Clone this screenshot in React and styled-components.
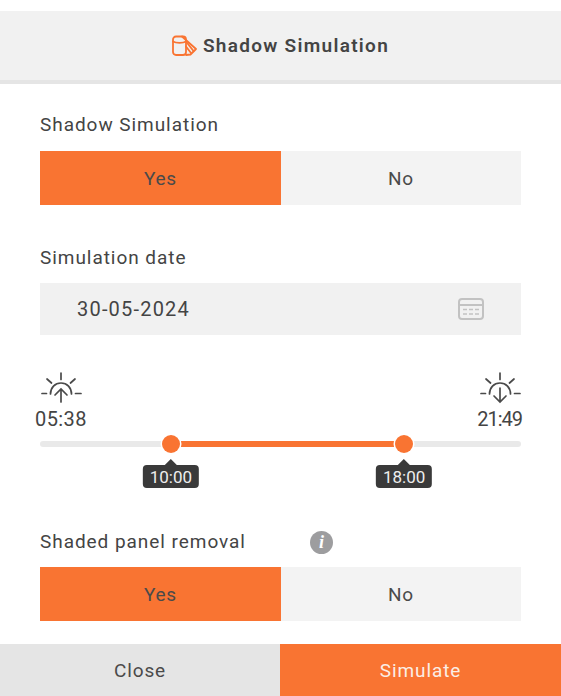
import styled, { createGlobalStyle } from 'styled-components';

const GlobalStyle = createGlobalStyle`
    html, body {
        margin: 0;
        padding: 0;
        background: #fff;
    }
    body {
        font-family: 'Roboto', 'Liberation Sans', sans-serif;
    }
`;

const Panel = styled.div`
    width: 561px;
    height: 696px;
    padding-top: 11px;
    box-sizing: border-box;
    display: flex;
    flex-direction: column;
    color: #444;
    overflow: hidden;
`;

const Header = styled.div`
    height: 69px;
    flex: none;
    background: #f1f1f1;
    border-bottom: 4px solid #e5e5e5;
    display: flex;
    align-items: center;
    justify-content: center;
    gap: 6px;
    font-size: 19px;
    font-weight: 600;
    letter-spacing: 1.3px;
    color: #444;
`;

const Body = styled.div`
    flex: 1;
    padding: 29px 40px 0;
    display: flex;
    flex-direction: column;
`;

const Label = styled.div`
    display: flex;
    align-items: center;
    height: 22px;
    font-size: 19px;
    letter-spacing: 0.95px;
    color: #444;
    margin-bottom: ${(p) => p.$gap}px;
`;

const Toggle = styled.div`
    display: grid;
    grid-template-columns: 240.7px 1fr;
    height: 54px;
    background: #f3f3f3;
    margin-bottom: ${(p) => p.$gap}px;
`;

const ToggleOption = styled.div`
    display: flex;
    align-items: center;
    justify-content: center;
    font-size: 19px;
    letter-spacing: 0.6px;
    color: #4a4a4a;
    background: ${(p) => (p.$active ? '#f97432' : 'transparent')};
`;

const DateField = styled.div`
    height: 52px;
    background: #f1f1f1;
    display: flex;
    align-items: center;
    justify-content: space-between;
    padding: 0 37px;
    font-size: 20px;
    letter-spacing: 1.2px;
    color: #444;
    margin-bottom: 37px;
`;

const SunRow = styled.div`
    display: flex;
    justify-content: space-between;
    margin: 0 -1px 0 -5px;
`;

const SunBlock = styled.div`
    display: flex;
    flex-direction: column;
    align-items: center;
    font-size: 20px;
    line-height: 24px;
    letter-spacing: ${(p) => (p.$tight ? '-1px' : '0.4px')};
    color: #444;
    gap: 3px;
`;

const Slider = styled.div`
    position: relative;
    height: 6px;
    margin: 10px 0 0;
    background: #e9e9e9;
    border-radius: 3px;
`;

const SliderFill = styled.div`
    position: absolute;
    top: 0;
    bottom: 0;
    background: #f97432;
`;

const Thumb = styled.div`
    position: absolute;
    top: 3px;
    width: 18px;
    height: 18px;
    margin: -9px 0 0 -9px;
    border-radius: 50%;
    background: #f97432;
    box-shadow: 0 0 0 1.5px #fff;
`;

const ThumbTip = styled.div`
    position: absolute;
    top: 24px;
    transform: translateX(-50%);
    height: 23px;
    padding: 0 7px;
    border-radius: 4px;
    background: #3a3a3a;
    color: #eee;
    font-size: 17px;
    line-height: 24px;

    &::before {
        content: '';
        position: absolute;
        left: 50%;
        top: -6px;
        margin-left: -6px;
        border: 6px solid transparent;
        border-top: 0;
        border-bottom-color: #3a3a3a;
    }
`;

const RemovalLabel = styled(Label)`
    margin-top: 83px;
`;

const InfoBadge = styled.span`
    width: 23px;
    height: 23px;
    margin: 3px 0 0 64px;
    border-radius: 50%;
    background: #9d9d9f;
    color: #fff;
    font-family: 'Liberation Serif', serif;
    font-style: italic;
    font-weight: 700;
    font-size: 18px;
    letter-spacing: 0;
    display: flex;
    align-items: center;
    justify-content: center;
`;

const Footer = styled.div`
    flex: none;
    height: 52px;
    display: grid;
    grid-template-columns: 280px 281px;
`;

const FooterButton = styled.div`
    display: flex;
    align-items: center;
    justify-content: center;
    font-size: 19px;
    letter-spacing: 0.9px;
    color: ${(p) => (p.$primary ? '#fbeee6' : '#4a4a4a')};
    background: ${(p) => (p.$primary ? '#f97432' : '#e5e5e5')};
`;

function ShadowIcon() {
    return (
        <svg width="25" height="22" viewBox="0 0 25 22" fill="none" stroke="#f97432" strokeWidth="1.8" strokeLinecap="round" strokeLinejoin="round">
            <rect x="1" y="1.500" width="13" height="18.500" rx="3" />
            <path d="M1 6.500c3 1.800 10 1.800 13 0" />
            <path d="M10 1.500l14 12.500-5.500 5.500-4.500.5" />
            <path d="M14 6.500l7.500 9.500M14 11.500l5 6.500" />
        </svg>
    );
}

function CalendarIcon() {
    return (
        <svg width="26" height="24" viewBox="0 0 26 24" fill="none" stroke="#c2c2c2" strokeWidth="2">
            <rect x="1" y="2" width="24" height="20" rx="3" />
            <path d="M1 8h24" />
            <path d="M5 12.500h16M5 17h16" strokeDasharray="4 2" strokeWidth="1.600" />
        </svg>
    );
}

function SunIcon({ down }) {
    return (
        <svg width="42" height="32" viewBox="0 0 42 32" fill="none" stroke="#4a4a4a" strokeWidth="1.700" strokeLinecap="round">
            <path d="M21 1v6.500M7 7l4.500 4M35 7l-4.500 4M2 21.500h4.500M35.500 21.500H41" />
            <path d="M10.500 22c0-6.500 4.500-11 10.500-11s10.500 4.500 10.500 11" />
            {down ? (
                <path d="M21 16v14M15 24l6 6 6-6" />
            ) : (
                <path d="M21 30V17M15 23l6-6 6 6" />
            )}
        </svg>
    );
}

function App() {
    return (
        <>
            <GlobalStyle />
            <Panel>
                <Header>
                    <ShadowIcon />
                    Shadow Simulation
                </Header>
                <Body>
                    <Label $gap={16}>Shadow Simulation</Label>
                    <Toggle $gap={41}>
                        <ToggleOption $active>Yes</ToggleOption>
                        <ToggleOption>No</ToggleOption>
                    </Toggle>
                    <Label $gap={15}>Simulation date</Label>
                    <DateField>
                        30-05-2024
                        <CalendarIcon />
                    </DateField>
                    <SunRow>
                        <SunBlock>
                            <SunIcon />
                            05:38
                        </SunBlock>
                        <SunBlock $tight>
                            <SunIcon down />
                            21:49
                        </SunBlock>
                    </SunRow>
                    <Slider>
                        <SliderFill style={{ left: '27.2%', width: '48.5%' }} />
                        <Thumb style={{ left: '27.2%' }} />
                        <Thumb style={{ left: '75.7%' }} />
                        <ThumbTip style={{ left: '27.2%' }}>10:00</ThumbTip>
                        <ThumbTip style={{ left: '75.7%' }}>18:00</ThumbTip>
                    </Slider>
                    <RemovalLabel $gap={15}>
                        Shaded panel removal
                        <InfoBadge>i</InfoBadge>
                    </RemovalLabel>
                    <Toggle $gap={0}>
                        <ToggleOption $active>Yes</ToggleOption>
                        <ToggleOption>No</ToggleOption>
                    </Toggle>
                </Body>
                <Footer>
                    <FooterButton>Close</FooterButton>
                    <FooterButton $primary>Simulate</FooterButton>
                </Footer>
            </Panel>
        </>
    );
}

export default App;
